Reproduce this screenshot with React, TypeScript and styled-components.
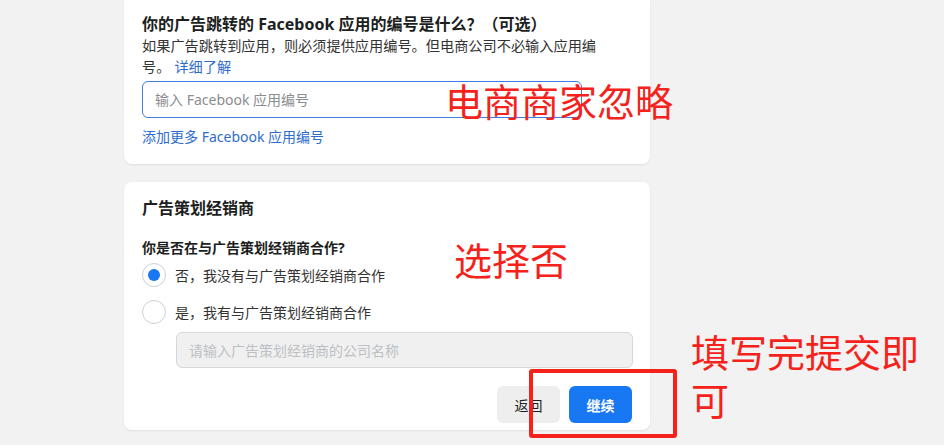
import React from "react";
import styled, { createGlobalStyle } from "styled-components";

const Global = createGlobalStyle`
  html, body { margin: 0; padding: 0; background: #f2f2f2; }
  body { font-family: "Noto Sans", "Noto Sans CJK SC", sans-serif; }
  * { box-sizing: border-box; }
`;

const Page = styled.div`
  position: relative;
  width: 944px;
  height: 445px;
  overflow: hidden;
  background: #f2f2f2;
  padding-left: 124px;
  display: flex;
  flex-direction: column;
  gap: 18px;
`;

const Card = styled.section<{ $cutTop?: boolean; $pt: number; $pb: number }>`
  width: 526px;
  background: #ffffff;
  border-radius: ${(p) => (p.$cutTop ? "0 0 8px 8px" : "8px")};
  box-shadow: 0 1px 2px rgba(0, 0, 0, 0.08);
  padding: ${(p) => p.$pt}px 18px ${(p) => p.$pb}px 18px;
  display: flex;
  flex-direction: column;
`;

const QTitle = styled.div`
  font-size: 16px;
  line-height: 21px;
  font-weight: 700;
  color: #1c1e21;
  white-space: nowrap;
`;

const Desc = styled.div`
  font-size: 14.2px;
  line-height: 21px;
  color: #333;
  width: 458px;
`;

const InlineLink = styled.span`
  color: #2f6ccf;
  margin-left: 4px;
`;

const Link = styled.a<{ $mt?: number }>`
  color: #2f6ccf;
  text-decoration: none;
  font-size: 14px;
  line-height: 20px;
  margin-top: ${(p) => p.$mt ?? 0}px;
`;

const TextInput = styled.input<{ $disabled?: boolean; $w: number; $mt: number; $ml?: number }>`
  width: ${(p) => p.$w}px;
  height: ${(p) => (p.$disabled ? 36 : 37)}px;
  margin-top: ${(p) => p.$mt}px;
  margin-left: ${(p) => p.$ml ?? 0}px;
  border-radius: 6px;
  border: ${(p) => (p.$disabled ? "1px solid #d6d8db" : "1.5px solid #3f7ee0")};
  background: ${(p) => (p.$disabled ? "#f0f0f0" : "#fff")};
  padding: 0 12px;
  font-family: inherit;
  font-size: 14px;
  outline: none;
  &::placeholder {
    color: ${(p) => (p.$disabled ? "#bcc0c4" : "#8a8d91")};
  }
`;

const SectionTitle = styled.div`
  font-size: 16px;
  line-height: 22px;
  font-weight: 600;
  color: #1c1e21;
`;

const Question = styled.div`
  font-size: 14px;
  line-height: 20px;
  font-weight: 700;
  color: #1c1e21;
  margin-top: 19px;
`;

const RadioList = styled.div`
  display: flex;
  flex-direction: column;
  gap: 3px;
`;

const RadioRow = styled.label`
  height: 34px;
  display: flex;
  align-items: center;
  gap: 9px;
  font-size: 14px;
  color: #333;
`;

const RadioCircle = styled.span<{ $checked?: boolean }>`
  width: 24px;
  height: 24px;
  border-radius: 50%;
  border: 1px solid #ccd0d5;
  background: #fff;
  display: flex;
  align-items: center;
  justify-content: center;
  &::after {
    content: "";
    width: 12px;
    height: 12px;
    border-radius: 50%;
    background: ${(p) => (p.$checked ? "#1877f2" : "transparent")};
  }
`;

const Actions = styled.div`
  display: flex;
  justify-content: flex-end;
  gap: 9px;
  margin-top: 18px;
`;

const Button = styled.button<{ $primary?: boolean }>`
  width: 63px;
  height: 37px;
  border: none;
  border-radius: 6px;
  font-family: inherit;
  font-size: 14px;
  font-weight: ${(p) => (p.$primary ? 700 : 400)};
  color: ${(p) => (p.$primary ? "#fff" : "#1c1e21")};
  background: ${(p) => (p.$primary ? "#1877f2" : "#eeeeee")};
`;

const Note = styled.div<{ $x: number; $y: number; $w?: number }>`
  position: absolute;
  left: ${(p) => p.$x}px;
  top: ${(p) => p.$y}px;
  width: ${(p) => (p.$w ? `${p.$w}px` : "auto")};
  font-family: "Noto Sans CJK SC", sans-serif;
  font-size: 38px;
  line-height: 48px;
  color: #f5221b;
  white-space: ${(p) => (p.$w ? "normal" : "nowrap")};
  pointer-events: none;
`;

const Frame = styled.div`
  position: absolute;
  left: 529px;
  top: 369px;
  width: 148px;
  height: 69px;
  border: 4px solid #f5221b;
  border-radius: 3px;
  pointer-events: none;
`;

export default function App() {
  return (
    <>
      <Global />
      <Page>
        <Card $cutTop $pt={14} $pb={17}>
          <QTitle>你的广告跳转的 Facebook 应用的编号是什么？（可选）</QTitle>
          <Desc>
            如果广告跳转到应用，则必须提供应用编号。但电商公司不必输入应用编号。<InlineLink>详细了解</InlineLink>
          </Desc>
          <TextInput $w={440} $mt={4} placeholder="输入 Facebook 应用编号" />
          <Link $mt={9}>添加更多 Facebook 应用编号</Link>
        </Card>
        <Card $pt={15} $pb={7}>
          <SectionTitle>广告策划经销商</SectionTitle>
          <Question>你是否在与广告策划经销商合作?</Question>
          <RadioList>
            <RadioRow>
              <RadioCircle $checked />
              否，我没有与广告策划经销商合作
            </RadioRow>
            <RadioRow>
              <RadioCircle />
              是，我有与广告策划经销商合作
            </RadioRow>
          </RadioList>
          <TextInput $disabled disabled $w={457} $mt={3} $ml={34} placeholder="请输入广告策划经销商的公司名称" />
          <Actions>
            <Button>返回</Button>
            <Button $primary>继续</Button>
          </Actions>
        </Card>
        <Note $x={445} $y={76}>电商商家忽略</Note>
        <Note $x={454} $y={235}>选择否</Note>
        <Note $x={691} $y={327} $w={240}>填写完提交即可</Note>
        <Frame />
      </Page>
    </>
  );
}
